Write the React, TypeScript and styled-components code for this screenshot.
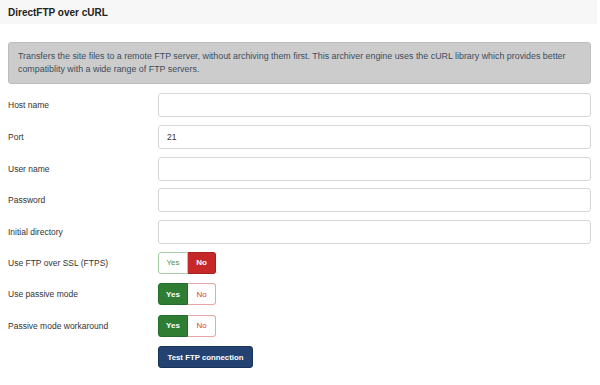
import styled, { createGlobalStyle, css } from "styled-components";

const GlobalStyle = createGlobalStyle`
  html, body {
    margin: 0;
    padding: 0;
    background: #fff;
  }
  body {
    font-family: "Liberation Sans", Arial, sans-serif;
    color: #333;
  }
`;

const Page = styled.div`
  width: 600px;
  padding-bottom: 12px;
`;

const Header = styled.div`
  background: #f7f7f7;
  margin-right: 3px;
  height: 24px;
  display: flex;
  align-items: center;
  padding: 0 8px;
`;

const Title = styled.h3`
  margin: 0;
  font-size: 10px;
  font-weight: 700;
  color: #222;
`;

const Body = styled.div`
  padding: 18px 9px 0 8px;
`;

const Alert = styled.div`
  background: #cccccc;
  border: 1px solid #bdbdbd;
  border-radius: 3px;
  padding: 7px 9px 7px 9px;
  font-size: 8.9px;
  line-height: 13px;
  color: #3e4d5c;
  margin-bottom: 9px;
`;

const Row = styled.div<{ $compact?: boolean }>`
  display: grid;
  grid-template-columns: 150px 1fr;
  align-items: center;
  min-height: ${(p) => (p.$compact ? 22 : 24)}px;
  margin-bottom: ${(p) => (p.$compact ? 9.5 : 7.8)}px;
`;

const Label = styled.label`
  font-size: 8.5px;
  color: #333;
`;

const Input = styled.input`
  box-sizing: border-box;
  height: 24px;
  width: 100%;
  border: 1px solid #d6d6d6;
  border-radius: 3px;
  padding: 0 8px;
  font-family: inherit;
  font-size: 8.5px;
  color: #333;
  outline: none;
`;

const Toggle = styled.div`
  display: inline-flex;
  height: 22px;
`;

const ToggleButton = styled.span<{ $kind: "yes" | "no"; $active: boolean }>`
  box-sizing: border-box;
  display: flex;
  align-items: center;
  justify-content: center;
  font-size: 8px;
  height: 22px;
  border: 1px solid;
  ${(p) =>
    p.$kind === "yes"
      ? css`
          width: 30px;
          border-radius: 3px 0 0 3px;
        `
      : css`
          width: 28px;
          border-radius: 0 3px 3px 0;
          border-left: none;
        `}
  ${(p) =>
    p.$kind === "yes" && p.$active
      ? css`
          background: #2e7d32;
          border-color: #256b29;
          color: #fff;
          font-weight: 700;
        `
      : p.$kind === "yes"
      ? css`
          background: #fff;
          border-color: #a9cfa9;
          color: #4f8f4f;
        `
      : p.$active
      ? css`
          background: #c62828;
          border-color: #a82020;
          color: #fff;
          font-weight: 700;
        `
      : css`
          background: #fff;
          border-color: #e8a5a5;
          color: #d04040;
        `}
`;

const Button = styled.button`
  box-sizing: border-box;
  height: 22px;
  width: 95px;
  padding: 0;
  background: #234272;
  border: 1px solid #19325a;
  border-radius: 3px;
  color: #fff;
  font-family: inherit;
  font-size: 7.8px;
  font-weight: 700;
  justify-self: start;
`;

const fields = [
  { label: "Host name", value: "" },
  { label: "Port", value: "21" },
  { label: "User name", value: "" },
  { label: "Password", value: "" },
  { label: "Initial directory", value: "" },
];

const toggles = [
  { label: "Use FTP over SSL (FTPS)", on: false },
  { label: "Use passive mode", on: true },
  { label: "Passive mode workaround", on: true },
];

export default function App() {
  return (
    <Page>
      <GlobalStyle />
      <Header>
        <Title>DirectFTP over cURL</Title>
      </Header>
      <Body>
        <Alert>
          Transfers the site files to a remote FTP server, without archiving them first. This archiver
          engine uses the cURL library which provides better compatiblity with a wide range of FTP servers.
        </Alert>
        {fields.map((f) => (
          <Row key={f.label}>
            <Label>{f.label}</Label>
            <Input type="text" defaultValue={f.value} />
          </Row>
        ))}
        {toggles.map((t) => (
          <Row key={t.label} $compact>
            <Label>{t.label}</Label>
            <Toggle>
              <ToggleButton $kind="yes" $active={t.on}>Yes</ToggleButton>
              <ToggleButton $kind="no" $active={!t.on}>No</ToggleButton>
            </Toggle>
          </Row>
        ))}
        <Row $compact>
          <span />
          <Button>Test FTP connection</Button>
        </Row>
      </Body>
    </Page>
  );
}
